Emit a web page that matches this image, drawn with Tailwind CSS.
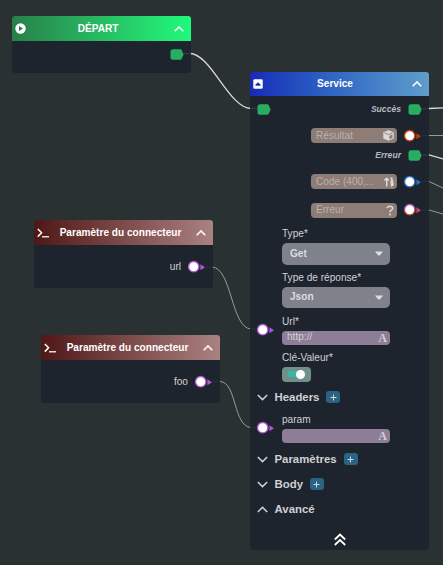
<!DOCTYPE html>
<html lang="fr">
<head>
<meta charset="utf-8">
<title>Connecteur</title>
<script src="https://cdn.jsdelivr.net/npm/@tailwindcss/browser@4"></script>
</head>
<body class="relative h-[565px] w-[443px] overflow-hidden bg-[#2a3132] font-['Liberation_Sans',Arial,sans-serif] text-[10.100px] leading-[14px] text-[#d0d1d3]">

<!-- shared symbols -->
<svg class="hidden">
  <symbol id="up" viewBox="0 0 10 6"><path d="M.7 5.200 5 .9 9.300 5.200" fill="none" stroke="currentColor" stroke-width="1.500"/></symbol>
  <symbol id="down" viewBox="0 0 11 7"><path d="M.8 1 5.500 5.600 10.200 1" fill="none" stroke="currentColor" stroke-width="1.500"/></symbol>
  <symbol id="flow" viewBox="0 0 14 11"><path d="M3 .3H10.500Q11.200.3 11.700 1.200L13.600 5.500 11.700 9.800Q11.200 10.700 10.500 10.700H3Q.5 10.700.5 8.200V2.800Q.5.3 3 .3Z" fill="#28ae60"/></symbol>
  <symbol id="port" viewBox="0 0 20 14"><path d="M13.400 4.300 18 7.200 13.400 10.200Z" fill="currentColor"/><circle cx="6.700" cy="6.700" r="5.200" fill="#fff" stroke="currentColor" stroke-width="1.400"/></symbol>
  <symbol id="term" viewBox="0 0 13 10"><path d="M.8 1 4.600 4.800.8 8.600" fill="none" stroke="#fff" stroke-width="1.500"/><path d="M5 8.700H12" stroke="#ddd" stroke-width="1.500"/></symbol>
</svg>

<div class="absolute inset-x-0 bottom-0 h-px bg-[#292d32]"></div>

<!-- connections -->
<svg class="absolute inset-0" width="443" height="565" fill="none">
  <g stroke="#d8dada" stroke-width="1.300">
    <path d="M184 53.500H190C211 54 229 108 251 108.500H258"/>
    <path d="M422 108.500H429L443 107.800"/>
    <path d="M422 155H429L443 159"/>
  </g>
  <g stroke="#969b9b" stroke-width="1">
    <path d="M422 135.500H443"/>
    <path d="M422 181.500H429L443 188"/>
    <path d="M422 210H429L443 214"/>
    <path d="M205 267H212C232 268 231 328 251 329H257"/>
    <path d="M213 381.500H220C237 382 233 426.500 251 427.500H257"/>
  </g>
</svg>

<!-- start node -->
<section class="absolute left-[12px] top-[16px] h-[57px] w-[179px] overflow-hidden rounded-[3px] bg-[#1d232d]/90">
  <header class="flex h-[25px] items-center bg-linear-to-r from-[#26804a] to-[#1dfb7b] pl-[3px] pr-[7px] font-bold text-white">
    <svg class="size-[11px]" viewBox="0 0 11 11"><circle cx="5.500" cy="5.500" r="5.200" fill="#fff"/><path d="M4 3 8 5.500 4 8Z" fill="#26804a"/></svg>
    <span class="flex-1 pr-[4px] text-center">DÉPART</span>
    <svg class="h-[6px] w-[10px]"><use href="#up"/></svg>
  </header>
  <div class="flex h-[26px] items-center justify-end pr-[7px]"><svg class="h-[11px] w-[14px]"><use href="#flow"/></svg></div>
</section>

<!-- parameter nodes -->
<section class="absolute left-[34px] top-[220px] h-[68px] w-[179px] overflow-hidden rounded-[3px] bg-[#1d232d]/90">
  <header class="flex h-[25px] items-center bg-linear-to-r from-[#4f1717] to-[#aa8282] pl-[3px] pr-[7px] font-bold text-white">
    <svg class="h-[10px] w-[13px]"><use href="#term"/></svg>
    <span class="flex-1 whitespace-nowrap pr-[5px] text-center">Paramètre du connecteur</span>
    <svg class="h-[6px] w-[10px]"><use href="#up"/></svg>
  </header>
  <div class="flex h-[43px] items-center justify-end gap-[6px] pr-[6px]"><span>url</span><svg class="h-[14px] w-[20px] text-[#b057d0]"><use href="#port"/></svg></div>
</section>
<section class="absolute left-[41px] top-[335px] h-[68px] w-[179px] overflow-hidden rounded-[3px] bg-[#1d232d]/90">
  <header class="flex h-[25px] items-center bg-linear-to-r from-[#4f1717] to-[#aa8282] pl-[3px] pr-[7px] font-bold text-white">
    <svg class="h-[10px] w-[13px]"><use href="#term"/></svg>
    <span class="flex-1 whitespace-nowrap pr-[5px] text-center">Paramètre du connecteur</span>
    <svg class="h-[6px] w-[10px]"><use href="#up"/></svg>
  </header>
  <div class="flex h-[43px] items-center justify-end gap-[6px] pr-[6px]"><span>foo</span><svg class="h-[14px] w-[20px] text-[#b057d0]"><use href="#port"/></svg></div>
</section>

<!-- service node -->
<section class="absolute left-[250px] top-[72px] h-[478px] w-[179px] overflow-hidden rounded-[3px] bg-[#1d232d]/90">
  <header class="flex h-[24px] items-center bg-linear-to-r from-[#1b28b8] to-[#609dcb] pl-[3px] pr-[7px] font-bold text-white">
    <svg class="size-[10px]" viewBox="0 0 10 10"><rect x=".3" y=".3" width="9.400" height="9.400" rx="1.200" fill="#fff"/><path d="M2.500 6.800V5.500L5 3.200 7.500 5.500V6.800Z" fill="#202fb0"/></svg>
    <span class="flex-1 pr-[5px] text-center">Service</span>
    <svg class="h-[6px] w-[10px]"><use href="#up"/></svg>
  </header>

  <div class="flex h-[26px] items-center pl-[7px] pr-[7px]">
    <svg class="h-[11px] w-[14px]"><use href="#flow"/></svg>
    <span class="ml-auto mr-[7px] text-[8.600px] font-bold italic text-[#b8babd]">Succès</span>
    <svg class="h-[11px] w-[14px]"><use href="#flow"/></svg>
  </div>
  <div class="flex h-[27px] items-center justify-end gap-[6px] pr-[6px]">
    <div class="flex h-[15px] w-[86px] items-center justify-between rounded-[4px] bg-[#8d7d76] pl-[5px] pr-[3px] text-[#b9b1ad]">
      <span>Résultat</span>
      <svg class="h-[11px] w-[11px]" viewBox="0 0 11 11"><path d="M5.500.3 10.700 2.300V8.600L5.500 10.800.3 8.600V2.300Z" fill="#dcdad8"/><path d="M1.300 2.900 5.500 4.500 9.700 2.900" fill="none" stroke="#8d7d76" stroke-width=".9"/><path d="M6.300 5.700 9.400 4.500V7.900L6.300 9.200Z" fill="#8d7d76"/></svg>
    </div>
    <svg class="h-[14px] w-[20px] text-[#c43d13]"><use href="#port"/></svg>
  </div>
  <div class="flex h-[12px] items-center justify-end pr-[7px]">
    <span class="mr-[7px] text-[8.600px] font-bold italic text-[#b8babd]">Erreur</span>
    <svg class="h-[11px] w-[14px]"><use href="#flow"/></svg>
  </div>
  <div class="flex h-[41px] items-center justify-end gap-[6px] pr-[6px]">
    <div class="flex h-[15px] w-[86px] items-center justify-between rounded-[4px] bg-[#8d7d76] pl-[5px] pr-[3px] text-[#b9b1ad]">
      <span>Code (400,...</span>
      <svg class="h-[10px] w-[10px]" viewBox="0 0 10 10" fill="none" stroke="#dcdad8" stroke-width="1.500"><path d="M2.700 9.500V1.500M.5 3.400 2.700 1.200 4.900 3.400M6.300 1.200H7.900V4.200M6.300 4.200H9.500"/><circle cx="7.900" cy="6.600" r="1"/><path d="M9 6.600Q9.100 8.800 6.800 9.200"/></svg>
    </div>
    <svg class="h-[14px] w-[20px] text-[#2b74c4]"><use href="#port"/></svg>
  </div>
  <div class="flex h-[16px] items-center justify-end gap-[6px] pr-[6px]">
    <div class="flex h-[15px] w-[86px] items-center justify-between rounded-[4px] bg-[#8d7d76] pl-[5px] pr-[3px] text-[#b9b1ad]">
      <span>Erreur</span>
      <svg class="h-[11px] w-[8px]" viewBox="0 0 8 11"><path d="M1 3Q1.600 1.200 4 1.200 6.700 1.300 6.700 3.300 6.700 4.600 5 5.300 4 5.900 4 7.300" fill="none" stroke="#dcdad8" stroke-width="1.500"/><circle cx="4" cy="9.500" r="1" fill="#dcdad8"/></svg>
    </div>
    <svg class="h-[14px] w-[20px]" viewBox="0 0 20 14"><linearGradient id="mix" x2="0" y2="1"><stop stop-color="#a957d6"/><stop offset="1" stop-color="#d0421c"/></linearGradient><path d="M13.400 4.300 18 7.200 13.400 10.200Z" fill="#c2486f"/><circle cx="6.700" cy="6.700" r="5.200" fill="#fff" stroke="url(#mix)" stroke-width="1.400"/></svg>
  </div>

  <div class="mt-[9px] pl-[32px]">Type*</div>
  <div class="ml-[32px] mt-[2px] flex h-[21.500px] w-[108px] items-center justify-between rounded-[5px] bg-[#7f828b] pl-[8px] pr-[7px] font-bold text-[#dcdddf]"><span>Get</span><svg class="h-[5px] w-[8px]" viewBox="0 0 8 5"><path d="M0 .5H8L5 4.200Q4 5 3 4.200Z" fill="#dcdddf"/></svg></div>
  <div class="mt-[6.500px] pl-[32px]">Type de réponse*</div>
  <div class="ml-[32px] mt-[1.500px] flex h-[21.500px] w-[108px] items-center justify-between rounded-[5px] bg-[#7f828b] pl-[8px] pr-[7px] font-bold text-[#dcdddf]"><span>Json</span><svg class="h-[5px] w-[8px]" viewBox="0 0 8 5"><path d="M0 .5H8L5 4.200Q4 5 3 4.200Z" fill="#dcdddf"/></svg></div>
  <div class="mt-[7px] pl-[32px]">Url*</div>
  <div class="flex h-[18px] items-center gap-[6px] pl-[6px]">
    <svg class="-mt-[6px] h-[14px] w-[20px] shrink-0 self-start text-[#b057d0]"><use href="#port"/></svg>
    <div class="flex h-[14.500px] w-[108px] items-center justify-between rounded-[4px] bg-[#8d7d96] pl-[5px] pr-[3px]"><span class="pb-[2px]">http://</span><span class="font-['Liberation_Serif',serif] text-[12px] font-bold">A</span></div>
  </div>
  <div class="mt-[4px] pl-[32px]">Clé-Valeur*</div>
  <div class="ml-[32px] mt-[2px] flex h-[14.500px] w-[29px] items-center rounded-[4px] bg-[#6f918a] pl-[6px]">
    <div class="flex h-[6px] w-[16px] items-center justify-end rounded-full bg-[#35b9a6]"><div class="-mr-px size-[9px] shrink-0 rounded-full bg-white"></div></div>
  </div>

  <div class="mt-[7.500px] flex h-[16px] items-center pl-[7px] text-[11.400px] font-bold">
    <svg class="mr-[6.500px] h-[7px] w-[11px]"><use href="#down"/></svg><span>Headers</span>
    <span class="ml-[7px] flex h-[12px] w-[14px] items-center justify-center rounded-[3px] bg-[#2a6384]"><svg class="size-[7px]" viewBox="0 0 7 7"><path d="M3.500.5V6.500M.5 3.500H6.500" stroke="#cfd8de"/></svg></span>
  </div>
  <div class="mt-[8px] pl-[32px]">param</div>
  <div class="flex h-[18px] items-center gap-[6px] pl-[6px]">
    <svg class="-mt-[6px] h-[14px] w-[20px] shrink-0 self-start text-[#b057d0]"><use href="#port"/></svg>
    <div class="flex h-[14.500px] w-[108px] items-center justify-end rounded-[4px] bg-[#8d7d96] pr-[3px]"><span class="font-['Liberation_Serif',serif] text-[12px] font-bold">A</span></div>
  </div>
  <div class="mt-[6px] flex h-[16px] items-center pl-[7px] text-[11.400px] font-bold">
    <svg class="mr-[6.500px] h-[7px] w-[11px]"><use href="#down"/></svg><span>Paramètres</span>
    <span class="ml-[7px] flex h-[12px] w-[14px] items-center justify-center rounded-[3px] bg-[#2a6384]"><svg class="size-[7px]" viewBox="0 0 7 7"><path d="M3.500.5V6.500M.5 3.500H6.500" stroke="#cfd8de"/></svg></span>
  </div>
  <div class="mt-[9px] flex h-[16px] items-center pl-[7px] text-[11.400px] font-bold">
    <svg class="mr-[6.500px] h-[7px] w-[11px]"><use href="#down"/></svg><span>Body</span>
    <span class="ml-[7px] flex h-[12px] w-[14px] items-center justify-center rounded-[3px] bg-[#2a6384]"><svg class="size-[7px]" viewBox="0 0 7 7"><path d="M3.500.5V6.500M.5 3.500H6.500" stroke="#cfd8de"/></svg></span>
  </div>
  <div class="mt-[9px] flex h-[16px] items-center pl-[7px] text-[11.400px] font-bold">
    <svg class="mr-[6.500px] h-[7px] w-[11px] rotate-180"><use href="#down"/></svg><span>Avancé</span>
  </div>
  <svg class="mx-auto mt-[16px] h-[13px] w-[12px]" viewBox="0 0 12 13" fill="none" stroke="#fff" stroke-width="1.800"><path d="M.8 6.500 6 1.500 11.200 6.500M.8 12 6 7 11.200 12"/></svg>
</section>
</body>
</html>
